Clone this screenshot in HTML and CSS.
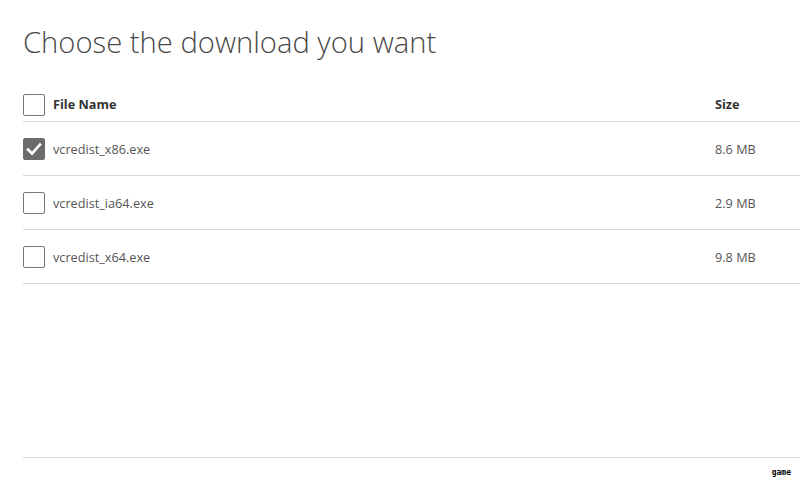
FILE: index.html
```html
<!DOCTYPE html>
<html lang="en">
<head>
  <meta charset="UTF-8" />
  <title>Choose the download you want</title>
  <link rel="stylesheet" href="styles.css">
</head>
<body>

<div class="page">
  <h1>Choose the download you want</h1>

  <div class="table">
    <div class="row head">
      <span class="box"></span>
      <span class="name">File Name</span>
      <span class="size">Size</span>
    </div>
    <div class="row">
      <span class="box checked">
        <svg width="16" height="14" viewBox="0 0 16 14"><path d="M2 7.5 L6 11.5 L14 2.5" fill="none" stroke="#fff" stroke-width="2.6" stroke-linecap="square"/></svg>
      </span>
      <span class="name">vcredist_x86.exe</span>
      <span class="size">8.6 MB</span>
    </div>
    <div class="row">
      <span class="box"></span>
      <span class="name">vcredist_ia64.exe</span>
      <span class="size">2.9 MB</span>
    </div>
    <div class="row">
      <span class="box"></span>
      <span class="name">vcredist_x64.exe</span>
      <span class="size">9.8 MB</span>
    </div>
  </div>

  <div class="footer">
    <span class="tag">game</span>
  </div>
</div>

</body>
</html>
```

FILE: styles.css
```css
body {
  margin: 0;
  background: #fff;
  font-family: "Open Sans", Arial, sans-serif;
  color: #555;
}
.page {
  padding-left: 23px;
}
h1 {
  margin: 22px 0 0;
  font-size: 29.2px;
  font-weight: 300;
  line-height: 40px;
  color: #4a4a4a;
}
.table {
  margin-top: 6px;
}
.row {
  display: flex;
  align-items: center;
  height: 53px;
  border-bottom: 1px solid #d9d9d9;
  font-size: 12.7px;
}
.head {
  align-items: flex-end;
  height: 48px;
  padding-bottom: 5px;
  font-weight: bold;
  color: #333;
}
.head .name,
.head .size {
  align-self: center;
  padding-top: 23px;
}
.box {
  width: 20px;
  height: 20px;
  border: 1px solid #777;
  border-radius: 2px;
  margin-right: 8px;
  display: flex;
  align-items: center;
  justify-content: center;
  flex: none;
}
.box.checked {
  background: #6b6b6b;
  border-color: #6b6b6b;
}
.name {
  flex: 1;
}
.size {
  width: 85px;
  flex: none;
}
.footer {
  margin-top: 173px;
  border-top: 1px solid #d9d9d9;
  text-align: right;
  height: 22px;
}
.tag {
  display: inline-block;
  margin: 10px 9px 0 0;
  font-family: "DejaVu Sans Mono", monospace;
  font-size: 8px;
  font-weight: bold;
  color: #000;
}
```
